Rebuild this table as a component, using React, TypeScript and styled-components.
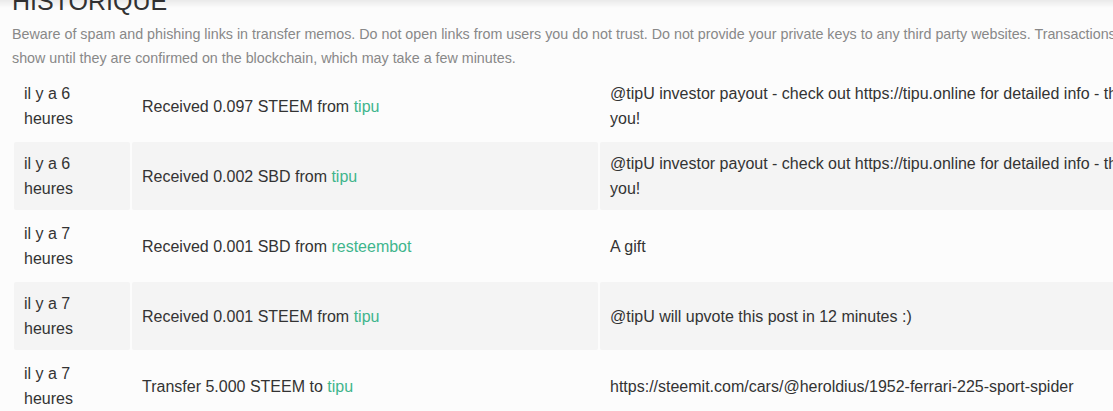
import React from "react";
import styled, { createGlobalStyle } from "styled-components";

const GlobalStyle = createGlobalStyle`
  html, body {
    margin: 0;
    padding: 0;
    background: #fcfcfc;
    overflow: hidden;
  }
  body {
    font-family: "Liberation Sans", Arial, sans-serif;
    color: #333333;
  }
`;

const TopShade = styled.div`
  position: fixed;
  top: 0;
  left: 0;
  right: 0;
  height: 8px;
  background: linear-gradient(to bottom, rgba(0, 0, 0, 0.07), rgba(0, 0, 0, 0));
  pointer-events: none;
`;

const Page = styled.div`
  width: 1175px;
  padding: 0 0 0 12px;
`;

const Heading = styled.h2`
  margin: -13px 0 7px;
  font-size: 25px;
  font-weight: 400;
  line-height: 29px;
  text-transform: uppercase;
  color: #333333;
`;

const Warning = styled.p`
  margin: 0;
  font-size: 14.3px;
  line-height: 23.5px;
  color: #888888;
`;

const Table = styled.table`
  border-collapse: separate;
  border-spacing: 2px;
  table-layout: fixed;
  width: 1160px;
  font-size: 16px;
  line-height: 25px;
  color: #333333;
`;

const Row = styled.tr<{ $striped?: boolean }>`
  background: transparent;
  & > td {
    background: ${(p) => (p.$striped ? "#f4f4f4" : "transparent")};
  }
`;

const Cell = styled.td<{ $w: number }>`
  width: ${(p) => p.$w}px;
  height: 50px;
  padding: 9px 10px;
  vertical-align: middle;
  border-radius: 2px;
  box-sizing: content-box;
`;

const UserLink = styled.a`
  color: #3fb58c;
  text-decoration: none;
`;

type Tx = { when: string; action: string; user: string; memo: string };

const rows: Tx[] = [
  {
    when: "il y a 6 heures",
    action: "Received 0.097 STEEM from ",
    user: "tipu",
    memo: "@tipU investor payout - check out https://tipu.online for detailed info - thank you!",
  },
  {
    when: "il y a 6 heures",
    action: "Received 0.002 SBD from ",
    user: "tipu",
    memo: "@tipU investor payout - check out https://tipu.online for detailed info - thank you!",
  },
  {
    when: "il y a 7 heures",
    action: "Received 0.001 SBD from ",
    user: "resteembot",
    memo: "A gift",
  },
  {
    when: "il y a 7 heures",
    action: "Received 0.001 STEEM from ",
    user: "tipu",
    memo: "@tipU will upvote this post in 12 minutes :)",
  },
  {
    when: "il y a 7 heures",
    action: "Transfer 5.000 STEEM to ",
    user: "tipu",
    memo: "https://steemit.com/cars/@heroldius/1952-ferrari-225-sport-spider",
  },
];

export default function App() {
  return (
    <>
      <GlobalStyle />
      <Page>
        <Heading>Historique</Heading>
        <Warning>
          Beware of spam and phishing links in transfer memos. Do not open links from users you do
          not trust. Do not provide your private keys to any third party websites. Transactions will
          not show until they are confirmed on the blockchain, which may take a few minutes.
        </Warning>
        <Table>
          <tbody>
            {rows.map((r, i) => (
              <Row key={i} $striped={i % 2 === 1}>
                <Cell $w={96}>{r.when}</Cell>
                <Cell $w={446}>
                  {r.action}
                  <UserLink href="#">{r.user}</UserLink>
                </Cell>
                <Cell $w={550}>{r.memo}</Cell>
              </Row>
            ))}
          </tbody>
        </Table>
      </Page>
      <TopShade />
    </>
  );
}
